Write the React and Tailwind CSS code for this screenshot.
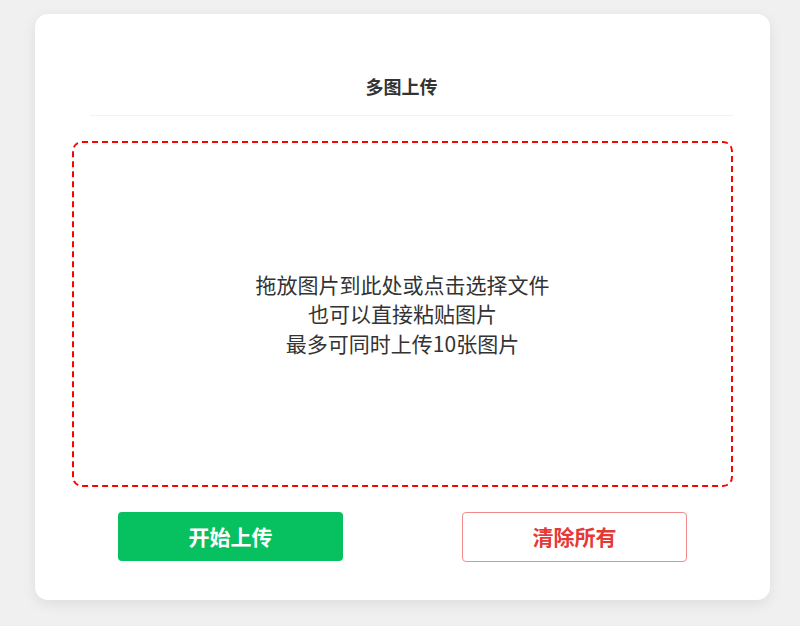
import React from "react"

const font = { fontFamily: '"Noto Sans CJK SC", "Noto Sans", sans-serif' }

const App = () => {
  return (
    <div className="min-h-[626px] w-[800px] bg-[#f0f0f0] pt-[14px] pl-[35px]" style={font}>
      <div className="w-[735px] h-[586px] bg-white rounded-[13px] shadow-[0_4px_14px_rgba(0,0,0,0.08)] flex flex-col">
        {/* header */}
        <div className="ml-[55px] mr-[37px] pt-[59px] pb-[16px] border-b border-[#f2f2f2]">
          <div className="text-center text-[18px] leading-[26px] font-bold text-[#333]">
            <span className="relative left-[-10px]">多图上传</span>
          </div>
        </div>

        {/* drop zone */}
        <div className="mx-[37px] mt-[25px] h-[346px] border-2 border-dashed border-[#ff0000] rounded-[10px] flex flex-col items-center justify-center text-[21px] leading-[29.5px] text-[#333]">
          <div>拖放图片到此处或点击选择文件</div>
          <div>也可以直接粘贴图片</div>
          <div>最多可同时上传10张图片</div>
        </div>

        <div className="mx-[37px] mt-[25px] px-[46px] flex justify-between">
          <button className="w-[225px] h-[49px] rounded-[4px] bg-[#07c160] text-white text-[21px] font-bold">
            开始上传
          </button>
          <button className="w-[225px] h-[50px] rounded-[4px] bg-white border border-[#f28b8b] text-[#e53935] text-[21px] font-bold">
            清除所有
          </button>
        </div>
      </div>
    </div>
  )
}

export default App
